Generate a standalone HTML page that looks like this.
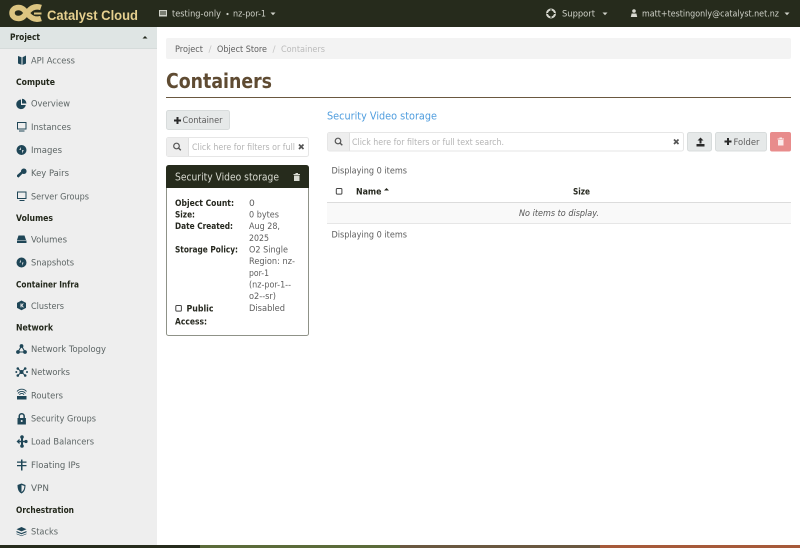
<!DOCTYPE html>
<html><head><meta charset="utf-8"><title>Containers</title>
<style>
html,body{margin:0;padding:0;background:#fff;width:800px;height:548px;overflow:hidden}
svg{display:block}
text{font-family:"DejaVu Sans","Liberation Sans",sans-serif;font-size:9.1px;fill:#5a5f5f}
.i{fill:#5c6464}
.h{font-weight:bold;fill:#23281c;font-size:8.9px}
.b{font-weight:bold;fill:#26281f;font-size:8.9px}
.d{fill:#5d5d5d}
.t{fill:#d9dbd2}
.ic{fill:#1f4657}
</style></head><body>
<svg width="800" height="548" viewBox="0 0 800 548" xmlns="http://www.w3.org/2000/svg">
<rect width="800" height="548" fill="#fff"/>
<!-- top bar -->
<rect width="800" height="27" fill="#262b1c"/>
<path d="M41 7.500C35 5.500 31 8 28 11.500C25 15 23 18.500 18.500 18.500C14.500 18.500 12 16 12 13C12 10 14.500 7.500 18.500 7.500C23 7.500 25 11 28 14.500C31 18 35 20.500 41 18.500" fill="none" stroke="#dcc581" stroke-width="5.500"/>
<path d="M34 12.500h7.500v2h-7.500z" fill="#dcc581"/>
<text x="47" y="20" textLength="91" lengthAdjust="spacingAndGlyphs" style="font-size:13.500px;font-weight:bold;fill:#e6d08f;font-family:'Liberation Sans',sans-serif">Catalyst Cloud</text>
<path d="M159 10h8v6.500h-8z" fill="#cfd1c8"/><path d="M160 11.500h6v1h-6zM160 13.500h6v1h-6z" fill="#262b1c"/>
<text x="172" y="16.500" textLength="49" lengthAdjust="spacingAndGlyphs" style="fill:#cfd1c8">testing-only</text>
<circle cx="227.500" cy="14" r="1.100" fill="#cfd1c8"/>
<text x="233" y="16.500" textLength="33" lengthAdjust="spacingAndGlyphs" style="fill:#cfd1c8">nz-por-1</text>
<path d="M270.500 12.500h5l-2.500 2.800z" fill="#cfd1c8"/>
<circle cx="551" cy="13.500" r="4" fill="none" stroke="#d8d9d0" stroke-width="2"/><path d="M551 9v9M546.500 13.500h9" stroke="#262b1c" stroke-width="1"/>
<text x="562" y="16.500" textLength="33" lengthAdjust="spacingAndGlyphs" style="fill:#cfd1c8">Support</text>
<path d="M602.500 12.500h5l-2.500 2.800z" fill="#cfd1c8"/>
<circle cx="634" cy="11" r="1.800" fill="#d8d9d0"/><path d="M630.800 17l.8-3.500h4.800l.8 3.500z" fill="#d8d9d0"/>
<text x="642" y="16.500" textLength="137" lengthAdjust="spacingAndGlyphs" style="fill:#cfd1c8">matt+testingonly@catalyst.net.nz</text>
<path d="M784.500 12.500h5l-2.500 2.800z" fill="#cfd1c8"/>
<!-- sidebar -->
<rect x="0" y="27" width="157" height="518" fill="#eeeeee"/>
<rect x="0" y="27" width="157" height="21.500" fill="#dfe5e4"/><rect x="0" y="48" width="157" height="1" fill="#d5dbda"/>
<text class="h" x="10" y="40" textLength="30" lengthAdjust="spacingAndGlyphs">Project</text>
<path d="M142.500 38.500h5l-2.500-2.500z" fill="#23281c"/>
<g>
<text class="i" x="31" y="63.500" textLength="44" lengthAdjust="spacingAndGlyphs">API Access</text>
<text class="h" x="16" y="85" textLength="39" lengthAdjust="spacingAndGlyphs">Compute</text>
<text class="i" x="31" y="106.500" textLength="39" lengthAdjust="spacingAndGlyphs">Overview</text>
<text class="i" x="31" y="130" textLength="40" lengthAdjust="spacingAndGlyphs">Instances</text>
<text class="i" x="31" y="153" textLength="31" lengthAdjust="spacingAndGlyphs">Images</text>
<text class="i" x="31" y="176" textLength="38" lengthAdjust="spacingAndGlyphs">Key Pairs</text>
<text class="i" x="31" y="199.500" textLength="58" lengthAdjust="spacingAndGlyphs">Server Groups</text>
<text class="h" x="16" y="221" textLength="37" lengthAdjust="spacingAndGlyphs">Volumes</text>
<text class="i" x="31" y="242.500" textLength="36" lengthAdjust="spacingAndGlyphs">Volumes</text>
<text class="i" x="31" y="265.500" textLength="43" lengthAdjust="spacingAndGlyphs">Snapshots</text>
<text class="h" x="16" y="287.500" textLength="63" lengthAdjust="spacingAndGlyphs">Container Infra</text>
<text class="i" x="31" y="309" textLength="33" lengthAdjust="spacingAndGlyphs">Clusters</text>
<text class="h" x="16" y="330.500" textLength="37" lengthAdjust="spacingAndGlyphs">Network</text>
<text class="i" x="31" y="352" textLength="75" lengthAdjust="spacingAndGlyphs">Network Topology</text>
<text class="i" x="31" y="375" textLength="39" lengthAdjust="spacingAndGlyphs">Networks</text>
<text class="i" x="31" y="398.500" textLength="32" lengthAdjust="spacingAndGlyphs">Routers</text>
<text class="i" x="31" y="421.500" textLength="65" lengthAdjust="spacingAndGlyphs">Security Groups</text>
<text class="i" x="31" y="444.500" textLength="63" lengthAdjust="spacingAndGlyphs">Load Balancers</text>
<text class="i" x="31" y="468" textLength="49" lengthAdjust="spacingAndGlyphs">Floating IPs</text>
<text class="i" x="31" y="491" textLength="18" lengthAdjust="spacingAndGlyphs">VPN</text>
<text class="h" x="16" y="513" textLength="58" lengthAdjust="spacingAndGlyphs">Orchestration</text>
<text class="i" x="31" y="534.500" textLength="27" lengthAdjust="spacingAndGlyphs">Stacks</text>
</g>
<!-- sidebar icons -->
<g class="ic">
<path d="M18 56l3.500 1.200v7.500L18 63.500zM22.500 57.200L26 55.500v8l-3.500 1.500z"/>
<path d="M21 99.500a4.800 4.800 0 1 0 4.800 5.500h-4.800zM22 98.800v4.700h4.500a4.800 4.800 0 0 0-4.500-4.700z"/>
<path fill-rule="evenodd" d="M17 122h9.500v7.500H17zM18 123v5.500h7.500V123zM19 130.500h5.500v1H19z"/>
<circle cx="21.500" cy="150" r="5"/><path d="M20.800 147v3l-1.500 0zM22.200 150v3.500l1.500-3.500z" fill="#eeeeee"/>
<path d="M24 168.500a2.800 2.800 0 0 1 1 5.300c-1 .4-2 .2-2.500-.2l-4 4-1.500-1 0-1.500 4-3.500a2.800 2.800 0 0 1 3-3.100z"/>
<path fill-rule="evenodd" d="M17 191.500h9.500v7.500H17zM18 192.500v5.500h7.500v-5.500zM19.500 200h5v1h-5z"/>
<path d="M18.500 235.500h6l1.500 4.500h-9zM17 240.500h9.500v2.500H17z"/>
<circle cx="21.500" cy="262.500" r="5"/><path d="M20.800 259.500v3l-1.300 0zM22.200 262.500v3.300l1.300-3.300z" fill="#eeeeee"/>
<path d="M21.500 300.500l4.500 2.400v5l-4.500 2.400-4.500-2.400v-5z"/><path d="M20.500 303.500h1v1.400l1.200-1.400h1.200l-1.500 1.700 1.600 2.200h-1.200l-1.300-1.800v1.800h-1z" fill="#eeeeee"/>
<circle cx="21.500" cy="346" r="1.900"/><circle cx="18" cy="352" r="1.900"/><circle cx="25" cy="352" r="1.900"/>
<path d="M21.500 346L18 352H25z" fill="none" stroke="#1f4657" stroke-width="1.100"/>
<circle cx="21.500" cy="372" r="2"/><circle cx="17.800" cy="368.500" r="1.300"/><circle cx="25.200" cy="368.500" r="1.300"/><circle cx="17.800" cy="375.500" r="1.300"/><circle cx="25.200" cy="375.500" r="1.300"/><circle cx="27" cy="372" r="1"/><circle cx="16.300" cy="372" r="1"/>
<path d="M17.800 368.500l7.400 7M25.200 368.500l-7.400 7" stroke="#1f4657" stroke-width="1" fill="none"/>
<path d="M17 396h9.500v3.500H17z"/><path d="M18 393.500a4.500 4.500 0 0 1 7.500 0M17 391.500a6 6 0 0 1 9.500 0M19.500 394.800a2.500 2.500 0 0 1 4.500 0" stroke="#1f4657" fill="none" stroke-width=".9"/>
<path fill-rule="evenodd" d="M17.500 418h1v-1.800a3.200 3.200 0 0 1 6.400 0v1.800h1v6.500h-8.400zM20 418h3.400v-1.800a1.700 1.700 0 0 0-3.400 0z"/><circle cx="21.700" cy="421" r="1" fill="#eeeeee"/>
<path d="M16.500 441.500l3-2.700v5.400zM19 440.700h8v1.600h-8zM21 437h2v9h-2z"/><circle cx="22" cy="437" r="1.800"/><circle cx="22" cy="446" r="1.800"/><circle cx="26" cy="441.500" r="1.600"/>
<path d="M17 461.500h9.500v1.300H17zM17 465h9.500v1.300H17zM21 459.500h1.500v11H21z"/>
<path d="M17.500 485l4-1.500 4 1.500c0 4-1 7-4 8.500-3-1.500-4-4.500-4-8.500z"/><path d="M21.500 485v7c2-1.200 2.800-3.300 2.900-6z" fill="#eeeeee"/>
<path d="M21.500 527l5 2.200-5 2.200-5-2.200zM16.500 531l5 2 5-2v1.300l-5 2-5-2zM16.500 533.500l5 2 5-2v.6l-5 2-5-2z"/>
</g>
<!-- bottom stripes -->
<rect x="0" y="545" width="200" height="3" fill="#262b1c"/>
<rect x="200" y="545" width="200" height="3" fill="#5b6b3a"/>
<rect x="400" y="545" width="200" height="3" fill="#6a5840"/>
<rect x="600" y="545" width="200" height="3" fill="#a65a3a"/>
<!-- breadcrumb -->
<rect x="166" y="38" width="625" height="21" rx="2" fill="#f3f3f3"/>
<text class="d" x="175" y="52" textLength="28" lengthAdjust="spacingAndGlyphs">Project</text>
<text x="208.500" y="52" style="fill:#c4c4c4">/</text>
<text class="d" x="217" y="52" textLength="50" lengthAdjust="spacingAndGlyphs">Object Store</text>
<text x="272.500" y="52" style="fill:#c4c4c4">/</text>
<text x="281" y="52" textLength="44" lengthAdjust="spacingAndGlyphs" style="fill:#bbbbbb">Containers</text>
<!-- heading -->
<text x="166" y="88" textLength="106" lengthAdjust="spacingAndGlyphs" style="font-size:20px;font-weight:bold;fill:#5f4b32">Containers</text>
<rect x="166" y="97" width="625" height="1" fill="#6a5840"/>
<!-- add container -->
<rect x="166.500" y="110.500" width="63" height="19" rx="2" fill="#e6e9e9" stroke="#d8dcdc"/>
<path d="M176.500 117h2v2.500h2.500v2h-2.500v2.500h-2v-2.500H174v-2h2.500z" fill="#2a2a2a"/>
<text class="d" x="182.500" y="123" textLength="40" lengthAdjust="spacingAndGlyphs">Container</text>
<!-- left search -->
<rect x="166.500" y="137.500" width="142" height="19" rx="2" fill="#fff" stroke="#e6e6e6"/>
<path d="M167 138h21v18h-21z" fill="#eeeeee"/><rect x="188" y="138" width="1" height="18" fill="#e0e0e0"/>
<circle cx="176.500" cy="146" r="2.800" fill="none" stroke="#555" stroke-width="1.200"/><path d="M178.500 148l2.300 2.300" stroke="#555" stroke-width="1.400"/>
<text x="192" y="150" textLength="103" lengthAdjust="spacingAndGlyphs" style="fill:#b4b4b4">Click here for filters or full</text>
<path d="M299 144.500l4.500 4.500M303.500 144.500l-4.500 4.500" stroke="#555" stroke-width="1.700"/>
<!-- card -->
<rect x="166.500" y="165.500" width="142" height="170" rx="2" fill="#fff" stroke="#8f9288"/>
<path d="M166 168a3 3 0 0 1 3-3h137a3 3 0 0 1 3 3v20H166z" fill="#262b1c"/>
<text class="t" x="175" y="180.500" textLength="104" lengthAdjust="spacingAndGlyphs" style="font-size:10.500px">Security Video storage</text>
<path d="M293.500 174h6.500v1h-6.500zM295.500 173h2.500v1h-2.500zM294 175.500h5.500v5.500H294z" fill="#d9dbd2"/>
<text class="b" x="175" y="206" textLength="59" lengthAdjust="spacingAndGlyphs">Object Count:</text>
<text class="b" x="175" y="217.500" textLength="20" lengthAdjust="spacingAndGlyphs">Size:</text>
<text class="b" x="175" y="229" textLength="58" lengthAdjust="spacingAndGlyphs">Date Created:</text>
<text class="b" x="175" y="252.500" textLength="63" lengthAdjust="spacingAndGlyphs">Storage Policy:</text>
<text class="d" x="249" y="206">0</text>
<text class="d" x="249" y="217.500" textLength="30" lengthAdjust="spacingAndGlyphs">0 bytes</text>
<text class="d" x="249" y="229" textLength="31" lengthAdjust="spacingAndGlyphs">Aug 28,</text>
<text class="d" x="249" y="241" textLength="20" lengthAdjust="spacingAndGlyphs">2025</text>
<text class="d" x="249" y="252.500" textLength="39" lengthAdjust="spacingAndGlyphs">O2 Single</text>
<text class="d" x="249" y="264" textLength="46" lengthAdjust="spacingAndGlyphs">Region: nz-</text>
<text class="d" x="249" y="276" textLength="20" lengthAdjust="spacingAndGlyphs">por-1</text>
<text class="d" x="249" y="287.500" textLength="42" lengthAdjust="spacingAndGlyphs">(nz-por-1--</text>
<text class="d" x="249" y="299" textLength="27" lengthAdjust="spacingAndGlyphs">o2--sr)</text>
<text class="d" x="249" y="311" textLength="36" lengthAdjust="spacingAndGlyphs">Disabled</text>
<rect x="175.800" y="305.500" width="5.600" height="5.600" rx="1" fill="#fff" stroke="#444"/>
<text class="b" x="186.500" y="311.500" textLength="27" lengthAdjust="spacingAndGlyphs">Public</text>
<text class="b" x="175" y="324.500" textLength="32" lengthAdjust="spacingAndGlyphs">Access:</text>
<!-- right -->
<text x="327" y="119.500" textLength="110" lengthAdjust="spacingAndGlyphs" style="font-size:10.500px;fill:#4f9dde">Security Video storage</text>
<rect x="327.500" y="132.500" width="356" height="18.500" rx="2" fill="#fff" stroke="#e6e6e6"/>
<path d="M328 133h21v17.500h-21z" fill="#eeeeee"/><rect x="349" y="133" width="1" height="17.500" fill="#e0e0e0"/>
<circle cx="338" cy="141" r="2.800" fill="none" stroke="#555" stroke-width="1.200"/><path d="M340 143l2.300 2.300" stroke="#555" stroke-width="1.400"/>
<text x="352" y="145" textLength="152" lengthAdjust="spacingAndGlyphs" style="fill:#b4b4b4">Click here for filters or full text search.</text>
<path d="M674 139.500l4.500 4.500M678.500 139.500l-4.500 4.500" stroke="#555" stroke-width="1.700"/>
<rect x="687.500" y="132.500" width="24" height="18.500" rx="2" fill="#e6e9e9" stroke="#d8dcdc"/>
<path d="M700.500 137.500l3 3h-2v3h-2v-3h-2zM696.500 144h8v2.500h-8z" fill="#2a2a2a"/>
<rect x="715.500" y="132.500" width="51" height="18.500" rx="2" fill="#e6e9e9" stroke="#d8dcdc"/>
<path d="M727 138h2v2.500h2.500v2H729v2.500h-2v-2.500h-2.500v-2h2.500z" fill="#2a2a2a"/>
<text class="d" x="733.500" y="145" textLength="26" lengthAdjust="spacingAndGlyphs">Folder</text>
<rect x="770" y="132" width="21" height="19.500" rx="2" fill="#e88c8c"/>
<path d="M777.500 138.500h6.500v1h-6.500zM779.500 137.500h2.500v1h-2.500zM778 140h5.500v5.500H778z" fill="#fbeaea"/>
<text class="d" x="331.500" y="173.500" textLength="75.500" lengthAdjust="spacingAndGlyphs">Displaying 0 items</text>
<rect x="336.300" y="188.500" width="5.600" height="5.600" rx="1" fill="#fff" stroke="#444"/>
<text class="b" x="356" y="194.500" textLength="25.500" lengthAdjust="spacingAndGlyphs">Name</text>
<path d="M384 190.500h5l-2.500-2.500z" fill="#26281f"/>
<text class="b" x="573" y="194.500" textLength="17" lengthAdjust="spacingAndGlyphs">Size</text>
<rect x="327" y="202" width="464" height="1" fill="#dcdcdc"/>
<rect x="327" y="203" width="464" height="20" fill="#f9f9f9"/>
<rect x="327" y="223" width="464" height="1" fill="#e6e6e6"/>
<text x="519" y="216" textLength="80" lengthAdjust="spacingAndGlyphs" style="font-style:italic;fill:#555">No items to display.</text>
<text class="d" x="331.500" y="237.500" textLength="75.500" lengthAdjust="spacingAndGlyphs">Displaying 0 items</text>
</svg>
</body></html>
